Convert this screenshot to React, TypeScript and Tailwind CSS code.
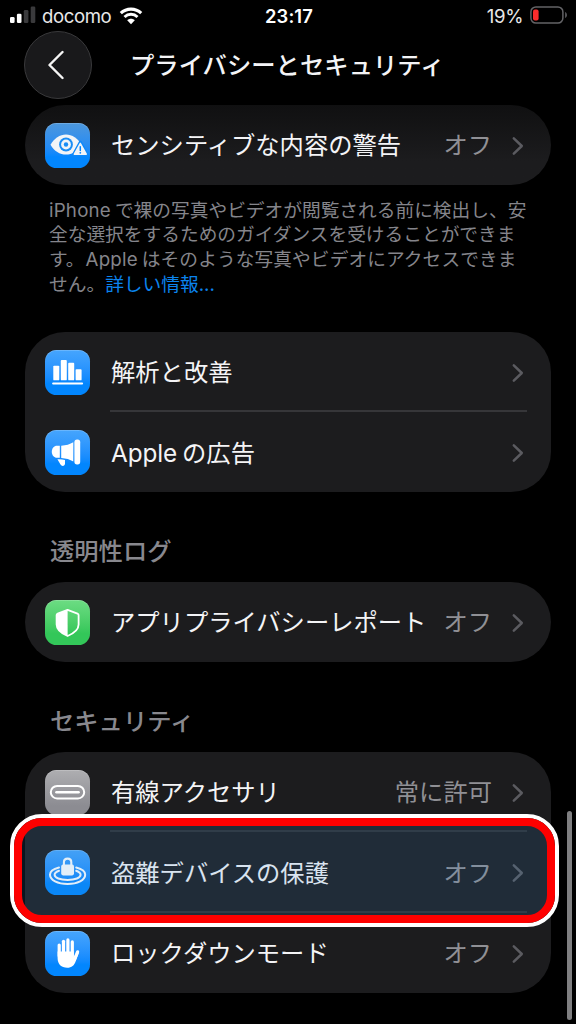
import type { ReactNode } from "react";

const FONT = "font-['Inter','Noto_Sans_CJK_JP',sans-serif]";

function Chevron() {
  return (
    <svg width="12" height="20" viewBox="0 0 12 20" fill="none" className="ml-[20px] shrink-0">
      <path d="M1.8 2.4 L9.8 10 L1.8 17.6" stroke="#5b5b60" strokeWidth="2.5" strokeLinecap="round" strokeLinejoin="round" />
    </svg>
  );
}

const tints = {
  blue: "bg-linear-to-b from-[#46a5fd] to-[#0286fe] to-75%",
  dimBlue: "bg-linear-to-b from-[#4c97dc] to-[#0286fe] to-75%",
  green: "bg-linear-to-b from-[#6cdc83] to-[#33c759] to-75%",
  gray: "bg-linear-to-b from-[#aeaeb1] to-[#8c8c92] to-80%",
};

function Tile({ tint, children }: { tint: keyof typeof tints; children: ReactNode }) {
  return (
    <div className={`size-[45px] shrink-0 overflow-hidden rounded-[11.5px] shadow-[inset_0_0.8px_0.5px_rgba(255,255,255,0.25)] ${tints[tint]}`}>
      <svg width="45" height="45" viewBox="0 0 45 45" fill="none">
        {children}
      </svg>
    </div>
  );
}

function EyeIcon() {
  return (
    <Tile tint="dimBlue">
      <path d="M5.5 21.7 C9 15.5 15 11.6 21 11.6 C27 11.6 33 15.5 36.5 21.7 C33 28 27 31.6 21 31.6 C15 31.6 9 28 5.5 21.7 Z" fill="#f2f4f7" />
      <circle cx="21" cy="21.5" r="6.9" fill="#1a8df5" />
      <circle cx="21" cy="21.5" r="4.9" fill="#f2f4f7" />
      <circle cx="21" cy="21.5" r="2.2" fill="#1a8df5" />
      <path d="M35.3 19.6 L42 31.8 H28.6 Z" fill="#0d88fa" stroke="#0d88fa" strokeWidth="3.4" strokeLinejoin="round" />
      <path d="M35.3 20.3 L41.3 31.2 H29.3 Z" fill="#f2f4f7" stroke="#f2f4f7" strokeWidth="1.4" strokeLinejoin="round" />
      <path d="M35.3 23.8 V27.4" stroke="#0286fe" strokeWidth="1.5" strokeLinecap="round" />
      <circle cx="35.3" cy="29.8" r="0.9" fill="#0286fe" />
    </Tile>
  );
}

function ChartIcon() {
  return (
    <Tile tint="blue">
      <g fill="#fff">
        <rect x="8.3" y="15.7" width="6" height="14.6" rx="0.9" />
        <rect x="15.8" y="10" width="6" height="20.3" rx="0.9" />
        <rect x="23.2" y="12.8" width="6" height="17.5" rx="0.9" />
        <rect x="30.6" y="19.2" width="6" height="11.1" rx="0.9" />
        <rect x="7.1" y="32.6" width="31" height="2" rx="1" />
      </g>
    </Tile>
  );
}

function MegaphoneIcon() {
  return (
    <Tile tint="blue">
      <g fill="#fff">
        <path d="M14.8 15.8 V27.8 H12 C9 27.8 6.8 25.2 6.8 21.8 C6.8 18.4 9 15.8 12 15.8 Z" />
        <path d="M16.2 15.7 C21 15.4 25 14.2 28.3 12.2 V31.4 C25 29.4 21 28.2 16.2 27.9 Z" />
        <rect x="29.4" y="9.6" width="5.8" height="24.8" rx="2.6" />
        <path d="M12.4 29.3 C15.2 29.1 17.6 29.4 20 30 V33.6 C20 36.4 16.7 36.8 15.5 34.6 Z" />
      </g>
    </Tile>
  );
}

function ShieldIcon() {
  return (
    <Tile tint="green">
      <path d="M22.6 9.8 L32.5 13.6 C33.2 13.9 33.6 14.3 33.6 15.1 V24.6 C33.6 30 28 33.8 22.6 36 C17.2 33.8 11.6 30 11.6 24.6 V15.1 C11.6 14.3 12 13.9 12.7 13.6 Z" stroke="#fff" strokeWidth="1.8" strokeLinejoin="round" />
      <path d="M22.6 9.8 L12.7 13.6 C12 13.9 11.6 14.3 11.6 15.1 V24.6 C11.6 30 17.2 33.8 22.6 36 Z" fill="#fff" />
    </Tile>
  );
}

function ConnectorIcon() {
  return (
    <Tile tint="gray">
      <rect x="5.8" y="15.9" width="33.4" height="12.6" rx="6.3" stroke="#fff" strokeWidth="2" />
      <rect x="10.2" y="21" width="24.6" height="2.4" rx="1.2" fill="#fff" />
    </Tile>
  );
}

function LockRingsIcon() {
  return (
    <Tile tint="blue">
      <g stroke="#fff" strokeWidth="2" strokeLinecap="round">
        <path d="M14 17.5 C8.6 18.8 5 21.5 5 24.8 C5 30 12.6 34 22.6 34 C32.6 34 40.2 30 40.2 24.8 C40.2 21.5 36.6 18.8 31.2 17.5" />
        <path d="M14 20.8 C11.4 21.8 9.6 23 9.6 24.8 C9.6 27.8 15 29.9 22.6 29.9 C30.2 29.9 35.6 27.8 35.6 24.8 C35.6 23 33.8 21.8 31.2 20.8" />
      </g>
      <rect x="16.2" y="14.6" width="12.8" height="10.8" rx="1.8" fill="#fff" />
      <path d="M18.9 15.5 V12.2 C18.9 10 20.4 8.6 22.6 8.6 C24.8 8.6 26.3 10 26.3 12.2 V15.5" stroke="#fff" strokeWidth="2.1" />
    </Tile>
  );
}

function HandIcon() {
  return (
    <Tile tint="blue">
      <g stroke="#fff" strokeWidth="3.2" strokeLinecap="round">
        <path d="M14.2 14 V25" />
        <path d="M18.5 10.3 V24" />
        <path d="M22.9 8.9 V24" />
        <path d="M27.3 10.9 V24" />
        <path d="M32.6 20.8 L29.4 28.6" />
      </g>
      <path d="M12.6 20.5 H28.9 V25.6 L31.4 22.6 L34 21.6 L30.7 30.3 C29.2 34.6 26.8 36.8 22.2 36.8 C16.2 36.8 12.6 33 12.6 27 Z" fill="#fff" />
    </Tile>
  );
}

function Row({ icon, label, value, divider, height = "h-20" }: { icon: ReactNode; label: ReactNode; value?: string; divider?: string; height?: string }) {
  return (
    <div className={`flex items-center pl-5 ${height}`}>
      {icon}
      <div className={`ml-5 mr-6 flex flex-1 items-center self-stretch border-b-2 pt-[3px] pr-[3px] ${divider ?? "border-transparent"}`}>
        <span className="flex-1 whitespace-nowrap pl-px text-[24.3px] leading-none text-[#f4f4f6]">{label}</span>
        <span className="whitespace-nowrap text-[24.3px] leading-none text-[#909095]">{value}</span>
        <Chevron />
      </div>
    </div>
  );
}

function SectionTitle({ children }: { children: ReactNode }) {
  return <h2 className="flex h-[90px] items-end pb-[19px] pl-[25px] text-[24.3px] leading-none font-medium text-[#88888e]">{children}</h2>;
}

function StatusBar() {
  return (
    <div className="flex h-8 items-center text-[#e8e8e8]">
      <div className="flex flex-1 items-center pl-[10px]">
        <svg width="26" height="17" viewBox="0 0 26 17" className="-mt-1">
          <rect x="0" y="11" width="4.6" height="6" rx="1.3" fill="#fff" />
          <rect x="6.9" y="7.8" width="4.6" height="9.2" rx="1.3" fill="#fff" />
          <rect x="13.8" y="4" width="4.6" height="13" rx="1.3" fill="#3a3a3c" />
          <rect x="20.7" y="0.5" width="4.6" height="16.5" rx="1.3" fill="#3a3a3c" />
        </svg>
        <span className="ml-[6px] text-[18.6px] leading-none tracking-[-0.4px]">docomo</span>
        <svg width="24" height="18" viewBox="0 0 24 18" fill="none" className="-mt-px ml-[8px]">
          <path d="M1.8 6.2 C7.4 0.7 16.6 0.7 22.2 6.2" stroke="#fff" strokeWidth="3.1" />
          <path d="M5.5 10 C9.2 6.4 14.8 6.4 18.5 10" stroke="#fff" strokeWidth="2.9" />
          <path d="M12 17.2 L8.2 13.3 C10.3 11.3 13.7 11.3 15.8 13.3 Z" fill="#fff" />
        </svg>
      </div>
      <span className="text-[18.4px] leading-none font-semibold tracking-[0.1px] text-white">23:17</span>
      <div className="flex flex-1 items-center justify-end pr-2">
        <span className="text-[18.6px] leading-none tracking-[-0.4px]">19%</span>
        <svg width="38" height="18" viewBox="0 0 38 18" fill="none" className="-mt-[2px] ml-[7px]">
          <rect x="0.9" y="0.9" width="32" height="16.2" rx="5" stroke="#636366" strokeWidth="1.5" />
          <path d="M35.2 6 C37.4 7 37.4 11 35.2 12 Z" fill="#636366" />
          <rect x="3" y="3.6" width="5.6" height="10.8" rx="2" fill="#fb2c2c" />
        </svg>
      </div>
    </div>
  );
}

export default function App() {
  return (
    <main lang="ja" className={`relative h-[1024px] w-[576px] overflow-hidden bg-black ${FONT}`}>
      <StatusBar />

      <header className="flex h-[73px] items-start">
        <button className="mt-[-1px] ml-[24px] flex size-[68px] items-center justify-center rounded-full border border-[#39393b] bg-[#19191b]">
          <svg width="20" height="30" viewBox="0 0 20 30" fill="none">
            <path d="M14.5 2 L1.5 15 L14.5 28" stroke="#f5f5f5" strokeWidth="2.4" strokeLinecap="round" strokeLinejoin="round" />
          </svg>
        </button>
        <h1 className="mt-[21px] ml-[38px] whitespace-nowrap text-[24.3px] leading-none font-medium tracking-[0.05px] text-[#f4f4f6]">プライバシーとセキュリティ</h1>
      </header>

      <section className="mx-[25px]">
        <div className="rounded-[40px] bg-linear-to-b from-[#101011] to-[#1c1c1e] to-70%">
          <Row icon={<EyeIcon />} label="センシティブな内容の警告" value="オフ" />
        </div>
        <p className="h-[147px] pt-[13.5px] pl-[24px] text-[18.72px] leading-[24.8px] whitespace-nowrap text-[#85858b]">
          <span className="mr-[4px] tracking-[0.2px]">iPhone</span>で裸の写真やビデオが閲覧される前に検出し、安<br />
          全な選択をするためのガイダンスを受けることができま<br />
          す。<span className="mr-[4px] ml-px tracking-[0.2px]">Apple</span><span className="tracking-[0.08px]">はそのような写真やビデオにアクセスできま</span><br />
          せん。<a className="text-[#0b84ee]">詳しい情報...</a>
        </p>

        <div className="h-[160px] rounded-[40px] bg-[#1c1c1e]">
          <Row icon={<ChartIcon />} label="解析と改善" divider="border-[#363639]" />
          <Row icon={<MegaphoneIcon />} label={<><span className="mr-[5px] tracking-[-0.1px]">Apple</span>の広告</>} height="h-[81px]" />
        </div>

        <SectionTitle>透明性ログ</SectionTitle>
        <div className="rounded-[40px] bg-[#1c1c1e]">
          <Row icon={<ShieldIcon />} label="アプリプライバシーレポート" value="オフ" />
        </div>

        <SectionTitle>セキュリティ</SectionTitle>
        <div className="rounded-[40px] bg-[#1c1c1e]">
          <Row icon={<ConnectorIcon />} label="有線アクセサリ" value="常に許可" divider="border-[#2e2f32]" />
          <div className="relative">
            <Row icon={<LockRingsIcon />} label="盗難デバイスの保護" value="オフ" divider="border-[#2e2f32]" height="h-[81px]" />
            <div className="absolute -top-[18px] -left-[15.5px] h-[113px] w-[549.5px] rounded-[32px] border-[4px] border-white">
              <div className="h-full w-full rounded-[28px] border-[8px] border-[#fe0000] bg-[rgba(61,141,210,0.15)]" />
            </div>
          </div>
          <Row icon={<HandIcon />} label="ロックダウンモード" value="オフ" height="h-20" />
        </div>
      </section>

      <div className="absolute top-[811px] left-[567px] h-[209px] w-[4.5px] rounded-full bg-[#7f7f81]" />
    </main>
  );
}
